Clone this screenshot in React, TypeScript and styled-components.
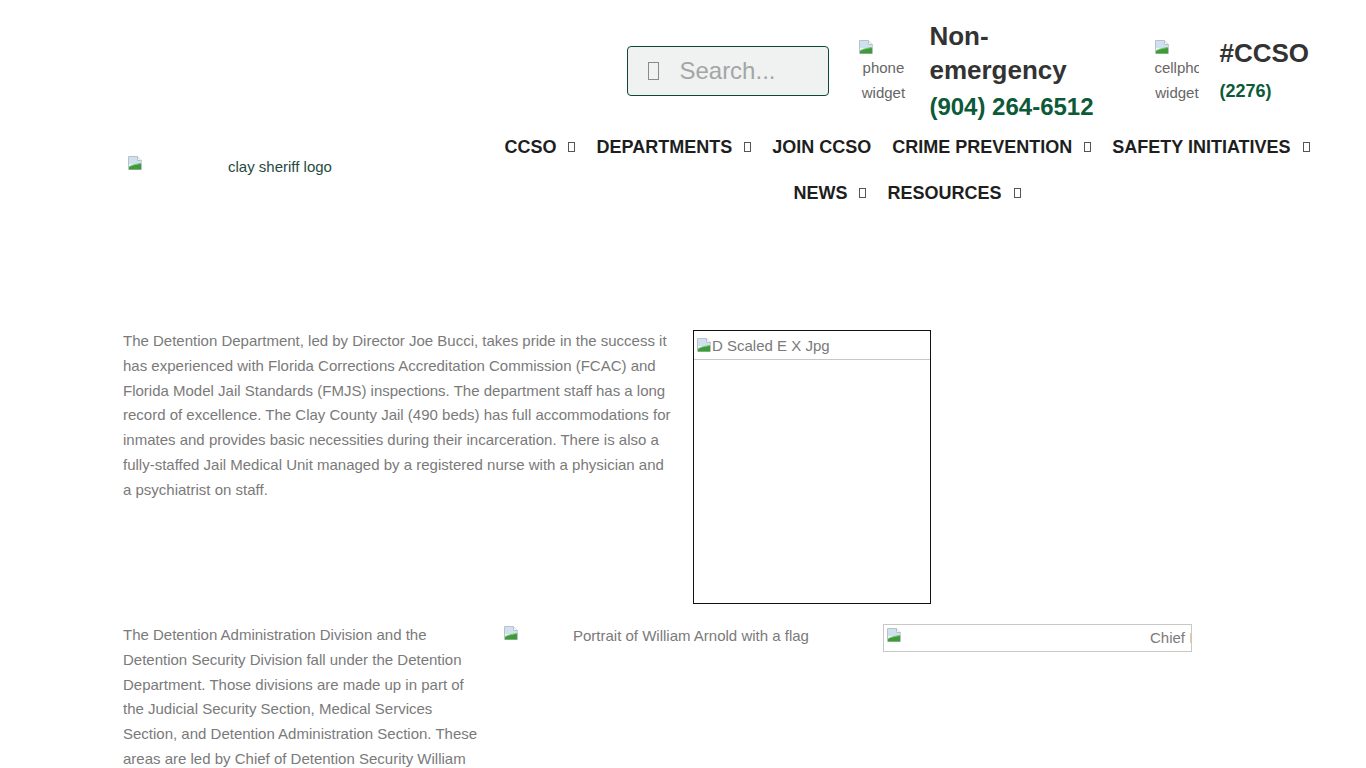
import React from "react";
import styled, { createGlobalStyle } from "styled-components";

const Global = createGlobalStyle`
  html, body { margin: 0; padding: 0; background: #ffffff; }
  body { font-family: "Liberation Sans", Arial, sans-serif; color: #7a7a7a; }
  * { box-sizing: border-box; }
`;

const Page = styled.div`
  width: 1366px;
  min-height: 768px;
  overflow: hidden;
`;

const Header = styled.header`
  display: flex;
  align-items: flex-start;
  padding-left: 127px;
  height: 216px;
`;

const LogoCol = styled.div`
  width: 368px;
  flex-shrink: 0;
  padding-top: 155px;
  display: flex;
  align-items: flex-start;
`;

const LogoAlt = styled.span`
  margin-left: 85px;
  margin-top: 3px;
  font-size: 15px;
  line-height: 18px;
  color: #254a40;
`;

const RightCol = styled.div`
  width: 824px;
  display: flex;
  flex-direction: column;
`;

const TopRow = styled.div`
  display: flex;
  justify-content: flex-end;
  align-items: flex-start;
  padding-top: 19px;
  padding-right: 10px;
  height: 124px;
`;

const SearchBox = styled.div`
  margin-top: 27px;
  width: 202px;
  height: 50px;
  border: 1px solid #0c4a30;
  border-radius: 4px;
  background: #eff2f1;
  display: flex;
  align-items: center;
  padding-left: 20px;
`;

const Tofu = styled.span<{ $w: number; $h: number }>`
  display: inline-block;
  width: ${(p) => p.$w}px;
  height: ${(p) => p.$h}px;
  border: 1px solid #8a8a8a;
  flex-shrink: 0;
`;

const SearchText = styled.span`
  margin-left: 20px;
  font-size: 24px;
  color: #a3a6a5;
`;

const Widget = styled.div<{ $w: number; $ml: number }>`
  width: ${(p) => p.$w}px;
  margin-left: ${(p) => p.$ml}px;
  margin-top: 20px;
  overflow: hidden;
  display: flex;
  flex-direction: column;
  align-items: flex-start;
  font-size: 15px;
  line-height: 25px;
  color: #666;
`;

const WidgetLabel = styled.span`
  display: block;
  width: 100%;
  text-align: center;
  white-space: nowrap;
`;

const ContactBlock = styled.div<{ $w?: number; $ml: number; $mt: number }>`
  margin-left: ${(p) => p.$ml}px;
  margin-top: ${(p) => p.$mt}px;
  ${(p) => (p.$w ? `width: ${p.$w}px;` : "")}
`;

const ContactTitle = styled.div`
  font-size: 26px;
  line-height: 34px;
  font-weight: 700;
  color: #333333;
`;

const ContactNumber = styled.div<{ $size: number; $mt: number; $lh: number }>`
  margin-top: ${(p) => p.$mt}px;
  font-size: ${(p) => p.$size}px;
  line-height: ${(p) => p.$lh}px;
  font-weight: 700;
  color: #0c5a38;
  white-space: nowrap;
`;

const NavRow = styled.nav`
  display: flex;
  justify-content: center;
  height: 46px;
  align-items: center;
`;

const NavItem = styled.a`
  display: flex;
  align-items: center;
  padding: 0 10.5px;
  font-size: 18px;
  font-weight: 700;
  color: #1e1e1e;
  text-decoration: none;
  white-space: nowrap;
`;

const NavCaret = styled(Tofu)`
  margin-left: 12px;
  border-color: #555;
`;

const Content = styled.main`
  padding-left: 123px;
  padding-top: 113px;
`;

const Section = styled.section<{ $mt: number }>`
  display: flex;
  align-items: flex-start;
  gap: 20px;
  margin-top: ${(p) => p.$mt}px;
`;

const Paragraph = styled.p<{ $w: number }>`
  margin: 0;
  width: ${(p) => p.$w}px;
  flex-shrink: 0;
  font-size: 15px;
  line-height: 24.8px;
  color: #7a7a7a;
`;

const FramedImage = styled.div`
  margin-top: 1px;
  width: 238px;
  height: 274px;
  border: 1px solid #111;
  flex-shrink: 0;
`;

const AltBar = styled.div`
  display: flex;
  align-items: center;
  height: 29px;
  padding-left: 2px;
  border-bottom: 1px solid #c8c8c8;
  font-size: 15px;
  color: #7a7a7a;
`;

const InlineAlt = styled.div<{ $w: number; $gap: number; $bordered?: boolean }>`
  margin-top: ${(p) => (p.$bordered ? "1px" : "3px")};
  width: ${(p) => p.$w}px;
  height: ${(p) => (p.$bordered ? "28px" : "auto")};
  flex-shrink: 0;
  display: flex;
  align-items: flex-start;
  overflow: hidden;
  padding: ${(p) => (p.$bordered ? "2px 0 0 2px" : "0")};
  border: ${(p) => (p.$bordered ? "1px solid #c8c8c8" : "none")};
  font-size: 15px;
  line-height: 20px;
  color: #7a7a7a;
  & > svg {
    margin-top: ${(p) => (p.$bordered ? "0" : "-1px")};
  }
  & > span {
    margin-left: ${(p) => p.$gap}px;
    margin-top: ${(p) => (p.$bordered ? "1px" : "0")};
    white-space: nowrap;
    flex-shrink: 0;
  }
`;

const BrokenIcon = () => (
  <svg width="16" height="16" viewBox="0 0 16 16" style={{ flexShrink: 0, display: "block" }}>
    <path d="M1.5 1.5h9l4 4v9h-13z" fill="#eef3f8" stroke="#b9c2cc" />
    <path d="M2 2h8.5v4h4V9H2z" fill="#cfe0ef" />
    <path d="M10.5 1.5v4h4" fill="#f6f8fa" stroke="#b9c2cc" />
    <path d="M2 14.5 L2 12 C5 10 8 9.5 14 8.5 V14.5z" fill="#3f9b3a" />
    <path d="M2 12 C5 10 8 9.5 14 8.5" stroke="#7cc36a" fill="none" />
  </svg>
);

const navRow1 = [
  { t: "CCSO", c: true },
  { t: "DEPARTMENTS", c: true },
  { t: "JOIN CCSO", c: false },
  { t: "CRIME PREVENTION", c: true },
  { t: "SAFETY INITIATIVES", c: true },
];
const navRow2 = [
  { t: "NEWS", c: true },
  { t: "RESOURCES", c: true },
];

export default function App() {
  return (
    <Page>
      <Global />
      <Header>
        <LogoCol>
          <BrokenIcon />
          <LogoAlt>clay sheriff logo</LogoAlt>
        </LogoCol>
        <RightCol>
          <TopRow>
            <SearchBox>
              <Tofu $w={11} $h={18} />
              <SearchText>Search...</SearchText>
            </SearchBox>
            <Widget $w={50} $ml={29}>
              <BrokenIcon />
              <WidgetLabel>phone</WidgetLabel>
              <WidgetLabel>widget</WidgetLabel>
            </Widget>
            <ContactBlock $w={166} $ml={21} $mt={0}>
              <ContactTitle>Non-emergency</ContactTitle>
              <ContactNumber $size={24} $mt={3} $lh={34}>(904) 264-6512</ContactNumber>
            </ContactBlock>
            <Widget $w={45} $ml={59}>
              <BrokenIcon />
              <WidgetLabel>cellphone</WidgetLabel>
              <WidgetLabel>widget</WidgetLabel>
            </Widget>
            <ContactBlock $ml={20} $mt={17}>
              <ContactTitle>#CCSO</ContactTitle>
              <ContactNumber $size={18} $mt={9} $lh={24}>(2276)</ContactNumber>
            </ContactBlock>
          </TopRow>
          <NavRow>
            {navRow1.map((n) => (
              <NavItem key={n.t} href="#">
                {n.t}
                {n.c && <NavCaret $w={7} $h={10} />}
              </NavItem>
            ))}
          </NavRow>
          <NavRow>
            {navRow2.map((n) => (
              <NavItem key={n.t} href="#">
                {n.t}
                {n.c && <NavCaret $w={7} $h={10} />}
              </NavItem>
            ))}
          </NavRow>
        </RightCol>
      </Header>
      <Content>
        <Section $mt={0}>
          <Paragraph $w={550}>
            The Detention Department, led by Director Joe Bucci, takes pride in the success it has
            experienced with Florida Corrections Accreditation Commission (FCAC) and Florida Model
            Jail Standards (FMJS) inspections. The department staff has a long record of excellence.
            The Clay County Jail (490 beds) has full accommodations for inmates and provides basic
            necessities during their incarceration. There is also a fully-staffed Jail Medical Unit
            managed by a registered nurse with a physician and a psychiatrist on staff.
          </Paragraph>
          <FramedImage>
            <AltBar>
              <BrokenIcon />
              <span>D Scaled E X Jpg</span>
            </AltBar>
          </FramedImage>
        </Section>
        <Section $mt={19}>
          <Paragraph $w={360}>
            The Detention Administration Division and the Detention Security Division fall under the
            Detention Department. Those divisions are made up in part of the Judicial Security
            Section, Medical Services Section, and Detention Administration Section. These areas are
            led by Chief of Detention Security William Arnold.
          </Paragraph>
          <InlineAlt $w={360} $gap={54}>
            <BrokenIcon />
            <span>Portrait of William Arnold with a flag</span>
          </InlineAlt>
          <InlineAlt $w={309} $gap={248} $bordered>
            <BrokenIcon />
            <span>Chief Illustration</span>
          </InlineAlt>
        </Section>
      </Content>
    </Page>
  );
}
